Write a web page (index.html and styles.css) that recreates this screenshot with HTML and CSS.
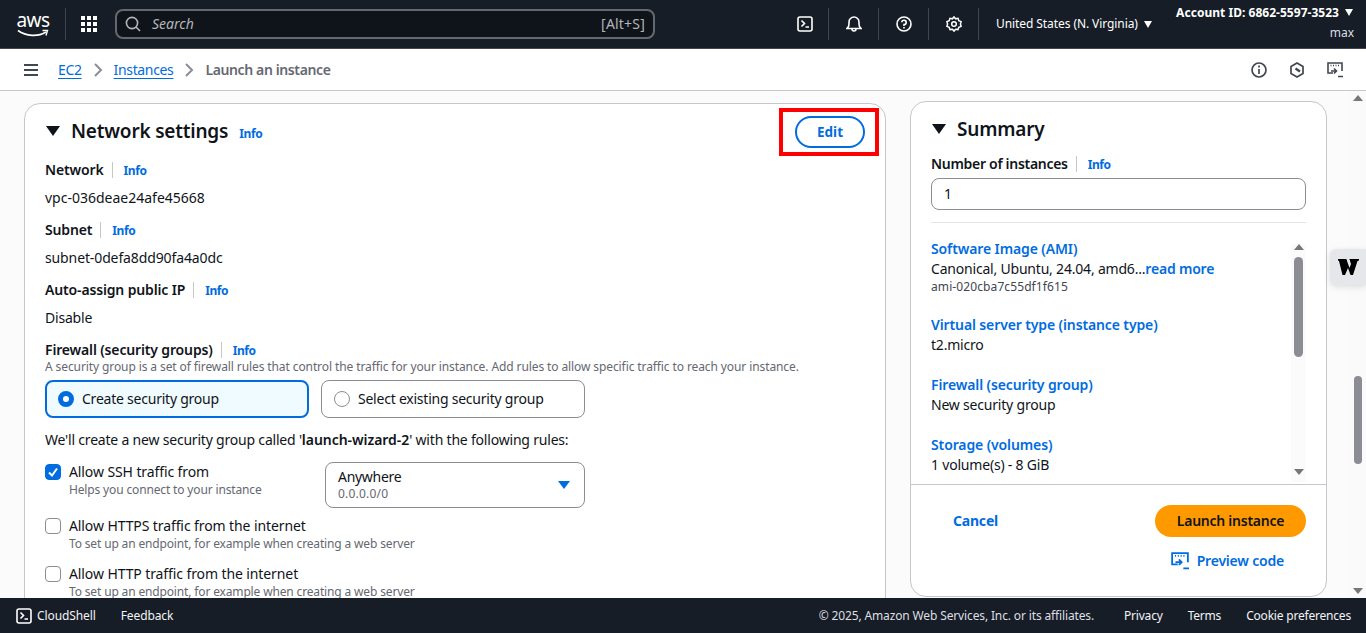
FILE: index.html
```html
<!DOCTYPE html>
<html lang="en">
<head>
<meta charset="utf-8">
<title>Launch an instance | EC2</title>
<link rel="stylesheet" href="styles.css">
</head>
<body>
<div class="app">
  <header class="topbar">
    <div class="logo">
      <span class="logo-text">aws</span>
      <svg class="logo-smile" width="32" height="9" viewBox="0 0 32 9"><path d="M1 1.5C9 7.5 21 8 29 3" fill="none" stroke="#fff" stroke-width="1.6"/><path d="M25.5 1.5L30.5 1.5L29 6.5" fill="none" stroke="#fff" stroke-width="1.4"/></svg>
    </div>
    <span class="topdiv first"></span>
    <svg class="grid-icon" width="16" height="16" viewBox="0 0 16 16" fill="#fff"><rect x="0" y="0" width="4" height="4"/><rect x="6" y="0" width="4" height="4"/><rect x="12" y="0" width="4" height="4"/><rect x="0" y="6" width="4" height="4"/><rect x="6" y="6" width="4" height="4"/><rect x="12" y="6" width="4" height="4"/><rect x="0" y="12" width="4" height="4"/><rect x="6" y="12" width="4" height="4"/><rect x="12" y="12" width="4" height="4"/></svg>
    <div class="search">
      <svg width="16" height="16" viewBox="0 0 16 16" fill="none" stroke="#b4b4bb" stroke-width="1.6"><circle cx="7" cy="7" r="5.6"/><path d="M11 11l4 4"/></svg>
      <span class="search-text">Search</span>
      <span class="search-key">[Alt+S]</span>
    </div>
    <div class="top-icons">
      <span class="top-icon"><svg width="16" height="16" viewBox="0 0 16 16" fill="none" stroke="#fff" stroke-width="1.6"><rect x="1" y="1" width="14" height="14" rx="2"/><path d="M4.5 4.5L7.5 7.5L4.5 10.5M8.5 11H12"/></svg></span>
      <span class="topdiv"></span>
      <span class="top-icon"><svg width="16" height="16" viewBox="0 0 16 16" fill="none" stroke="#fff" stroke-width="1.6"><path d="M1 12.5H15C13.6 11.5 13 10.3 13 8V6A5 5 0 0 0 3 6V8C3 10.3 2.4 11.5 1 12.5Z"/><path d="M6 13a2 2 0 0 0 4 0"/></svg></span>
      <span class="topdiv"></span>
      <span class="top-icon"><svg width="16" height="16" viewBox="0 0 16 16" fill="none" stroke="#fff" stroke-width="1.6"><circle cx="8" cy="8" r="7"/><path d="M5.8 6.2A2.2 2.2 0 1 1 8 8.6V10"/><path d="M8 11v1.4"/></svg></span>
      <span class="topdiv"></span>
      <span class="top-icon"><svg width="16" height="16" viewBox="0 0 16 16" fill="none" stroke="#fff" stroke-width="1.5"><path d="M8 .9l1.6 1.9 2.4-.5.8 2.4 2.3.9-.7 2.4.7 2.4-2.3.9-.8 2.3-2.4-.4L8 15.1l-1.6-1.9-2.4.4-.8-2.3-2.3-.9.7-2.4-.7-2.4 2.3-.9.8-2.4 2.4.5z"/><circle cx="8" cy="8" r="2.3"/></svg></span>
      <span class="topdiv"></span>
    </div>
    <div class="region">United States (N. Virginia)<span class="caret"></span></div>
    <div class="account">
      <div class="account-id">Account ID: 6862-5597-3523<span class="caret"></span></div>
      <div class="account-user">max</div>
    </div>
  </header>

  <nav class="crumbbar">
    <svg class="menu-icon" width="16" height="14" viewBox="0 0 16 14" stroke="#424650" stroke-width="2"><path d="M1 2H15M1 7H15M1 12H15"/></svg>
    <a class="crumb">EC2</a>
    <svg class="chev" width="10" height="14" viewBox="0 0 10 14" fill="none" stroke="#8c8c94" stroke-width="2"><path d="M2 1l6 6-6 6"/></svg>
    <a class="crumb">Instances</a>
    <svg class="chev" width="10" height="14" viewBox="0 0 10 14" fill="none" stroke="#8c8c94" stroke-width="2"><path d="M2 1l6 6-6 6"/></svg>
    <span class="crumb-current">Launch an instance</span>
    <div class="crumb-tools">
      <svg width="16" height="16" viewBox="0 0 16 16" fill="none" stroke="#424650" stroke-width="1.7"><circle cx="8" cy="8" r="7"/><path d="M8 7v5M8 3.6v1.8"/></svg>
      <svg width="16" height="16" viewBox="0 0 16 16" fill="none" stroke="#424650" stroke-width="1.7"><path d="M8 1l6 3.5v7L8 15l-6-3.5v-7z"/><path d="M6.5 6.5L11 9.5" stroke-width="2.4"/></svg>
      <svg width="16" height="16" viewBox="0 0 16 16" fill="none" stroke="#424650" stroke-width="1.6"><path d="M6 11H1V1H15V9"/><path d="M3.5 3.5H4.5M6 3.5H7M8.5 3.5H9.5M11 3.5H12"/><path d="M4 9H9M7 6.5L9.5 9L7 11.5M11 14.5H16"/></svg>
    </div>
  </nav>

  <div class="content">
    <main class="columns">
      <section class="card network">
        <div class="card-head">
          <span class="tri"></span>
          <h2 class="card-title">Network settings</h2>
          <a class="info info-head">Info</a>
          <span class="edit-wrap"><button class="edit-btn">Edit</button></span>
        </div>
        <div class="label-row first-label"><b>Network</b><span class="vr"></span><a class="info">Info</a></div>
        <div class="value digits">vpc-036deae24afe45668</div>
        <div class="label-row"><b>Subnet</b><span class="vr"></span><a class="info">Info</a></div>
        <div class="value digits2">subnet-0defa8dd90fa4a0dc</div>
        <div class="label-row"><b>Auto-assign public IP</b><span class="vr"></span><a class="info">Info</a></div>
        <div class="value">Disable</div>
        <div class="label-row"><b>Firewall (security groups)</b><span class="vr"></span><a class="info">Info</a></div>
        <div class="desc">A security group is a set of firewall rules that control the traffic for your instance. Add rules to allow specific traffic to reach your instance.</div>
        <div class="tiles">
          <div class="tile selected"><span class="radio on"></span>Create security group</div>
          <div class="tile"><span class="radio"></span>Select existing security group</div>
        </div>
        <p class="intro">We'll create a new security group called '<b>launch-wizard-2</b>' with the following rules:</p>
        <div class="ssh-row">
          <div class="check-item">
            <span class="check on"><svg width="12" height="12" viewBox="0 0 12 12" fill="none" stroke="#fff" stroke-width="2"><path d="M2 6.5L5 9.5L10 2.5"/></svg></span>
            <div><div class="check-label">Allow SSH traffic from</div><div class="check-help">Helps you connect to your instance</div></div>
          </div>
          <div class="select"><div><div class="select-main">Anywhere</div><div class="select-sub">0.0.0.0/0</div></div><span class="select-caret"></span></div>
        </div>
        <div class="check-item https">
          <span class="check"></span>
          <div><div class="check-label">Allow HTTPS traffic from the internet</div><div class="check-help">To set up an endpoint, for example when creating a web server</div></div>
        </div>
        <div class="check-item http">
          <span class="check"></span>
          <div><div class="check-label">Allow HTTP traffic from the internet</div><div class="check-help">To set up an endpoint, for example when creating a web server</div></div>
        </div>
      </section>

      <aside class="card summary">
        <div class="card-head summary-head">
          <span class="tri"></span>
          <h2 class="card-title">Summary</h2>
        </div>
        <div class="label-row count-label"><b>Number of instances</b><span class="vr"></span><a class="info">Info</a></div>
        <div class="count-input">1</div>
        <hr class="rule">
        <div class="sum-scroll">
          <div class="sum-list">
            <a class="sum-link">Software Image (AMI)</a>
            <div class="sum-val">Canonical, Ubuntu, 24.04, amd6...<a class="more">read more</a></div>
            <div class="sum-id">ami-020cba7c55df1f615</div>
            <a class="sum-link gap">Virtual server type (instance type)</a>
            <div class="sum-val">t2.micro</div>
            <a class="sum-link gap">Firewall (security group)</a>
            <div class="sum-val">New security group</div>
            <a class="sum-link gap">Storage (volumes)</a>
            <div class="sum-val">1 volume(s) - 8 GiB</div>
          </div>
          <div class="bar inner-bar">
            <span class="arrow up"></span>
            <span class="thumb inner-thumb"></span>
            <span class="arrow down"></span>
          </div>
        </div>
        <div class="sum-actions">
          <div class="action-row">
            <a class="cancel">Cancel</a>
            <button class="launch">Launch instance</button>
          </div>
          <a class="preview">
            <svg width="18" height="18" viewBox="0 0 16 16" fill="none" stroke="#006ce0" stroke-width="1.6"><path d="M6 11H1V1H15V9"/><path d="M3.5 3.5H4.5M6 3.5H7M8.5 3.5H9.5M11 3.5H12"/><path d="M4 9H9M7 6.5L9.5 9L7 11.5M11 14.5H16"/></svg>
            Preview code
          </a>
        </div>
      </aside>
    </main>
    <div class="bar page-bar">
      <span class="arrow up"></span>
      <span class="thumb page-thumb"></span>
      <span class="arrow down"></span>
    </div>
    <div class="widget"><svg width="21" height="16" viewBox="0 0 21 16" fill="#000"><path d="M0 0H8L9 1V2L11.5 9L13 5L12 2V1L11 0H21V1.5L19.5 2L15 16H12.5L10 9L7 16H4.5L1 2L0 1.5Z"/></svg></div>
  </div>

  <footer class="footer">
    <svg width="16" height="16" viewBox="0 0 16 16" fill="none" stroke="#fff" stroke-width="1.6"><rect x="1" y="1" width="14" height="14" rx="2"/><path d="M4.5 4.5L7.5 7.5L4.5 10.5M8.5 11H12"/></svg>
    <span class="cs">CloudShell</span>
    <span class="fb">Feedback</span>
    <span class="copy">© 2025, Amazon Web Services, Inc. or its affiliates.</span>
    <span class="flink">Privacy</span>
    <span class="flink">Terms</span>
    <span class="flink">Cookie preferences</span>
  </footer>
</div>
</body>
</html>
```
FILE: styles.css
```css
* { box-sizing: border-box; }
html, body { margin: 0; height: 100%; overflow: hidden; }
body { font-family: "Noto Sans", "Open Sans", sans-serif; font-size: 14px; line-height: 20px; letter-spacing: -.2px; color: #0f141a; background: #fff; }
a { color: #006ce0; }
.app { height: 633px; display: flex; flex-direction: column; }

.topbar { height: 49px; flex: none; background: #161d26; border-bottom: 1px solid #424650; display: flex; align-items: center; padding: 0 13px 0 17px; color: #fff; letter-spacing: 0; }
.logo { width: 32px; height: 30px; position: relative; display: flex; justify-content: center; }
.logo-text { font-size: 19px; line-height: 22px; letter-spacing: -.5px; }
.logo-smile { position: absolute; left: 0; top: 20px; }
.topdiv { width: 1px; height: 32px; background: #424650; flex: none; }
.topdiv.first { margin-left: 16px; }
.grid-icon { margin-left: 15px; flex: none; }
.search { width: 540px; height: 30px; margin-left: 18px; border: 2px solid #656871; border-radius: 8px; background: #0f141a; display: flex; align-items: center; padding: 0 8px; color: #b4b4bb; flex: none; }
.search-text { font-style: italic; margin-left: 11px; }
.search-key { margin-left: auto; letter-spacing: .2px; }
.top-icons { display: flex; align-items: center; margin-left: 130px; }
.top-icon { width: 49px; display: flex; justify-content: center; }
.top-icon:first-child { width: auto; margin: 0 15px 0 12px; }
.region { font-size: 12px; margin-left: 17px; white-space: nowrap; display: flex; align-items: center; letter-spacing: -.08px; }
.caret { width: 0; height: 0; border-left: 4.5px solid transparent; border-right: 4.5px solid transparent; border-top: 7px solid #fff; margin-left: 6px; display: inline-block; vertical-align: 1px; }
.account { margin-left: auto; text-align: right; font-size: 12px; line-height: 18px; margin-top: -2px; }
.account-id { font-weight: 700; white-space: nowrap; letter-spacing: .03px; }
.account-user { color: #dedee3; margin-top: 2px; margin-right: -1px; }

.crumbbar { height: 42px; flex: none; border-bottom: 1px solid #c6c6cd; background: #fff; display: flex; align-items: center; padding: 0 16px 0 23px; }
.menu-icon { margin-right: 19px; }
.crumb { color: #006ce0; text-decoration: underline; text-underline-offset: 3px; letter-spacing: -.35px; }
.chev { margin: 0 11px; }
.crumb-current { color: #656871; font-weight: 600; letter-spacing: -.38px; }
.crumb-tools { margin-left: auto; display: flex; gap: 22px; margin-right: 7px; }

.content { flex: 1; min-height: 0; display: flex; background: #fbfbfb; position: relative; overflow: hidden; }
.columns { flex: 1; display: flex; align-items: flex-start; padding: 10px 22px 0 24px; gap: 24px; min-width: 0; }
.card { background: #fff; border: 1px solid #c6c6cd; border-radius: 16px; }
.network { width: 862px; height: 520px; margin-top: 2px; padding: 0 20px; overflow: hidden; flex: none; position: relative; }
.summary { width: 417px; height: 496px; flex: none; padding: 0 20px; display: flex; flex-direction: column; }
.card-head { display: flex; align-items: center; height: 30px; margin-top: 12px; }
.tri { width: 0; height: 0; border-left: 7px solid transparent; border-right: 7px solid transparent; border-top: 10px solid #0f141a; margin-left: 1px; flex: none; }
.card-title { font-size: 19px; line-height: 24px; font-weight: 600; letter-spacing: -.2px; margin: 0 0 0 11px; white-space: nowrap; }
.info { font-size: 12px; font-weight: 700; color: #006ce0; letter-spacing: -.4px; margin-top: 2px; }
.info-head { margin-left: 11px; margin-top: 5px; }
.edit-wrap { margin-left: auto; border: 4px solid #f00; width: 100px; height: 48px; margin-right: -14px; display: flex; align-items: center; justify-content: center; flex: none; margin-top: 2px; padding-left: 2px; }
.edit-btn { width: 70px; height: 32px; margin-top: -1px; border: 2px solid #006ce0; border-radius: 16px; background: #fff; color: #006ce0; font: 700 13.5px "Noto Sans", sans-serif; padding: 0; }
.label-row { display: flex; align-items: center; height: 20px; margin-top: 12px; letter-spacing: -.15px; }
.label-row b { font-weight: 600; }
.first-label { margin-top: 14px; }
.vr { width: 1px; height: 16px; background: #c6c6cd; margin: 0 11px 0 8px; }
.value { margin-top: 8px; }
.digits { letter-spacing: 0; }
.digits2 { letter-spacing: -.12px; }
.desc { font-size: 12px; line-height: 14px; letter-spacing: -.1px; color: #656871; white-space: nowrap; }
.tiles { display: flex; gap: 12px; margin-top: 6px; }
.tile { width: 264px; height: 38px; border: 1px solid #8c8c94; border-radius: 8px; display: flex; align-items: center; padding-left: 12px; letter-spacing: -.23px; }
.tile.selected { border: 2px solid #006ce0; background: #f0fbff; padding-left: 11px; }
.radio { width: 16px; height: 16px; border-radius: 50%; border: 1px solid #8c8c94; margin-right: 8px; background: #fff; flex: none; }
.radio.on { border: 5px solid #006ce0; }
.intro { margin: 12px 0 0; letter-spacing: -.2px; }
.intro b { font-weight: 600; letter-spacing: -.05px; }
.ssh-row { display: flex; margin-top: 12px; }
.check-item { display: flex; gap: 8px; }
.ssh-row .check-item { width: 280px; }
.check { width: 16px; height: 16px; border: 1px solid #8c8c94; border-radius: 4px; margin-top: 2px; background: #fff; display: flex; align-items: center; justify-content: center; flex: none; }
.check.on { background: #006ce0; border-color: #006ce0; }
.check-label { line-height: 20px; letter-spacing: -.1px; }
.check-help { font-size: 12px; line-height: 16px; letter-spacing: -.15px; color: #656871; }
.select { width: 260px; height: 46px; border: 1px solid #8c8c94; border-radius: 8px; display: flex; align-items: center; justify-content: space-between; padding: 0 14px 0 12px; }
.select-main { line-height: 18px; letter-spacing: -.3px; }
.select-sub { font-size: 12px; line-height: 16px; letter-spacing: .2px; color: #656871; }
.select-caret { width: 0; height: 0; border-left: 6px solid transparent; border-right: 6px solid transparent; border-top: 8px solid #006ce0; }
.https { margin-top: 8px; }
.http { margin-top: 12px; }

.summary-head { margin-top: 12px; }
.count-label { margin-top: 10px; letter-spacing: -.3px; }
.count-input { height: 32px; border: 1px solid #8c8c94; border-radius: 8px; margin-top: 4px; padding: 5px 12px; }
.rule { border: 0; border-top: 1px solid #e3e3e8; margin: 12px 0 0; }
.sum-scroll { display: flex; height: 261px; padding-top: 16px; justify-content: space-between; }
.sum-list { display: flex; flex-direction: column; align-items: flex-start; }
.sum-link { font-weight: 600; letter-spacing: -.12px; }
.sum-link.gap { margin-top: 20px; }
.more { font-weight: 600; }
.sum-id { font-size: 12px; line-height: 16px; letter-spacing: .1px; color: #424650; }
.bar { display: flex; flex-direction: column; align-items: center; background: #fbfbfb; }
.inner-bar { width: 15px; height: 238px; margin-top: 5px; padding-bottom: 7px; }
.arrow { width: 0; height: 0; border-left: 5px solid transparent; border-right: 5px solid transparent; flex: none; }
.arrow.up { border-bottom: 6px solid #777; }
.arrow.down { border-top: 6px solid #777; margin-top: auto; }
.thumb { background: #8c8c94; border-radius: 5px; flex: none; }
.inner-thumb { width: 9px; height: 100px; margin-top: 7px; }
.sum-actions { border-top: 1px solid #c6c6cd; margin: 0 -20px; padding: 20px 20px 0; }
.action-row { display: flex; align-items: center; justify-content: space-between; }
.cancel { font-weight: 700; margin-left: 22px; }
.launch { width: 151px; height: 32px; border: 0; border-radius: 16px; background: #ff9900; color: #0f141a; font: 600 14px "Noto Sans", sans-serif; letter-spacing: -.25px; padding: 0 0 2px; }
.preview { display: flex; align-items: center; justify-content: flex-end; gap: 8px; margin-top: 14px; margin-right: 22px; font-weight: 600; }
.page-bar { width: 17px; flex: none; background: #fafafa; padding-top: 4px; padding-bottom: 4px; }
.page-thumb { width: 8px; height: 88px; margin-top: 275px; }

.widget { position: absolute; right: 0; top: 158px; width: 36px; height: 36px; background: #e6e7ea; border-radius: 6px 0 0 6px; box-shadow: 0 2px 6px rgba(0,0,0,.12); display: flex; align-items: center; justify-content: center; }

.footer { height: 35px; flex: none; background: #161d26; color: #f3f3f7; display: flex; align-items: center; padding: 0 15px 0 16px; font-size: 12px; letter-spacing: -.1px; }
.cs { margin-left: 5px; }
.fb { margin-left: 25px; }
.copy { margin-left: auto; color: #dedee3; letter-spacing: -.14px; }
.flink { margin-left: 25px; letter-spacing: -.2px; }
.copy + .flink { margin-left: 30px; }
```
